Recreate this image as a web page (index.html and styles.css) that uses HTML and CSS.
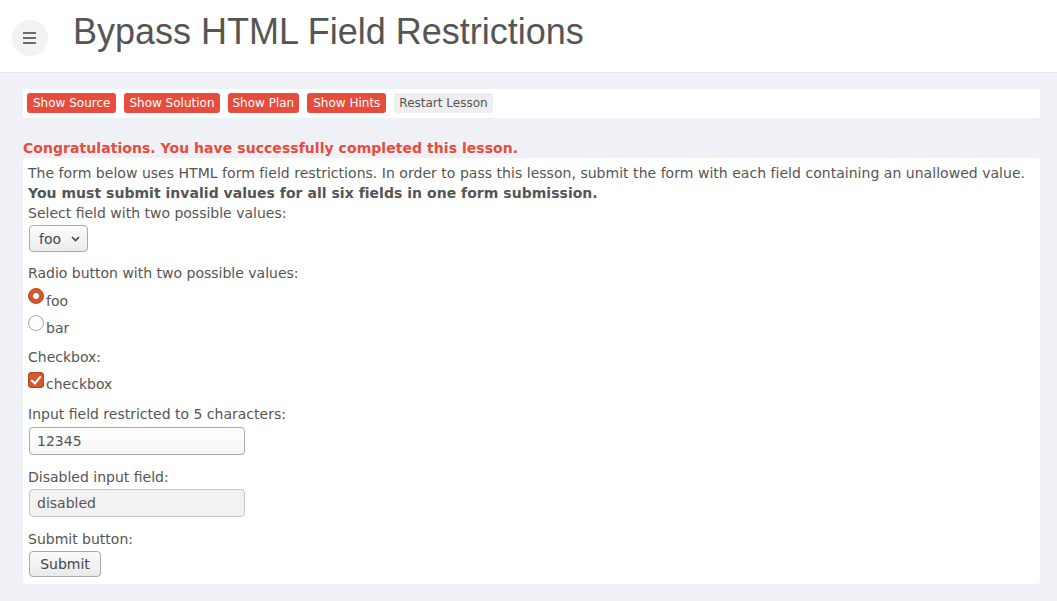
FILE: index.html
```html
<!DOCTYPE html>
<html lang="en">
<head>
<meta charset="utf-8">
<title>Bypass HTML Field Restrictions</title>
<link rel="stylesheet" href="styles.css">
</head>
<body>
<header class="topbar">
  <button class="menu-btn" type="button" aria-label="menu">
    <svg width="14" height="12" viewBox="0 0 14 12"><rect x="0" y="0" width="13" height="2" fill="#6b6b6b"/><rect x="0" y="5" width="13" height="2" fill="#6b6b6b"/><rect x="0" y="10" width="13" height="2" fill="#6b6b6b"/></svg>
  </button>
  <h1 class="page-title">Bypass HTML Field Restrictions</h1>
</header>
<main class="main">
  <div class="lesson-bar">
    <button class="btn btn-red btn-first" type="button">Show Source</button>
    <button class="btn btn-red" type="button">Show Solution</button>
    <button class="btn btn-red" type="button">Show Plan</button>
    <button class="btn btn-red btn-hints" type="button">Show Hints</button>
    <button class="btn btn-gray" type="button">Restart Lesson</button>
  </div>
  <div class="feedback">Congratulations. You have successfully completed this lesson.</div>
  <div class="lesson-content">
    <div class="intro">The form below uses HTML form field restrictions. In order to pass this lesson, submit the form with each field containing an unallowed value.<br><b>You must submit invalid values for all six fields in one form submission.</b></div>
    <form class="lesson-form" onsubmit="return false">
      <div class="lbl">Select field with two possible values:</div>
      <div class="select-wrap">
        <select class="sel"><option>foo</option><option>bar</option></select>
        <svg class="chev" width="9" height="6" viewBox="0 0 9 6"><path d="M1 1 L4.5 4.5 L8 1" fill="none" stroke="#444" stroke-width="1.6"/></svg>
      </div>
      <div class="lbl lbl-radio">Radio button with two possible values:</div>
      <div class="opt-row opt-first"><input class="radio" type="radio" name="r" checked>foo</div>
      <div class="opt-row"><input class="radio" type="radio" name="r">bar</div>
      <div class="lbl lbl-check">Checkbox:</div>
      <div class="opt-row opt-check"><input class="check" type="checkbox" checked>checkbox</div>
      <div class="lbl lbl-input">Input field restricted to 5 characters:</div>
      <input class="txt" type="text" value="12345" maxlength="5">
      <div class="lbl lbl-gap">Disabled input field:</div>
      <input class="txt txt-disabled" type="text" value="disabled" disabled>
      <div class="lbl lbl-gap">Submit button:</div>
      <button class="submit" type="submit">Submit</button>
    </form>
  </div>
</main>
</body>
</html>
```
FILE: styles.css
```css
* { box-sizing: border-box; }
html, body { margin: 0; padding: 0; }
body {
  background: #f0f1f6;
  font-family: "DejaVu Sans", Verdana, sans-serif;
  font-size: 14px;
  color: #555;
  height: 601px;
  overflow: hidden;
}
.topbar {
  background: #fff;
  height: 73px;
  border-bottom: 1px solid #e3e4e8;
  display: flex;
  align-items: center;
  padding-left: 12px;
}
.menu-btn {
  width: 36px;
  height: 36px;
  border-radius: 50%;
  border: none;
  background: #f2f2f2;
  padding: 0;
  display: flex;
  align-items: center;
  justify-content: center;
  margin-top: 3px;
}
.page-title {
  margin: 0 0 0 25px;
  font-family: "Liberation Sans", Arial, sans-serif;
  font-weight: normal;
  font-size: 36px;
  color: #555;
  line-height: 40px;
  margin-top: -8px;
}
.main {
  padding: 16px 17px 0 23px;
}
.lesson-bar {
  background: #fff;
  border-radius: 3px;
  padding: 4px;
  display: flex;
  gap: 8px;
  height: 29px;
}
.btn {
  font-family: "DejaVu Sans", Verdana, sans-serif;
  font-size: 12px;
  height: 20px;
  line-height: 20px;
  padding: 0 5px;
  border: none;
  border-radius: 3px;
}
.btn-first { padding: 0 6px; }
.btn-hints { padding: 0 6px; }
.btn-red { background: #e74c3c; color: #fff; }
.btn-gray { background: #eeeeee; color: #555; }
.feedback {
  color: #e74c3c;
  font-weight: bold;
  margin-top: 20px;
  line-height: 20px;
  letter-spacing: 0.05px;
}
.lesson-content {
  background: #fff;
  border-radius: 4px;
  margin-top: 0;
  padding: 5px 5px 7px 5px;
  height: 426px;
}
.intro { line-height: 20px; letter-spacing: 0.03px; }
.intro b { font-weight: bold; }
.lesson-form { display: flex; flex-direction: column; align-items: flex-start; }
.lbl { line-height: 20px; }
.select-wrap { position: relative; margin-top: 2px; margin-left: 1px; }
.sel {
  appearance: none;
  -webkit-appearance: none;
  width: 59px;
  height: 27px;
  border: 1px solid #a9a9a9;
  border-radius: 4px;
  background: linear-gradient(#fbfbfb, #ececec);
  font-family: "DejaVu Sans", Verdana, sans-serif;
  font-size: 14px;
  color: #444;
  padding: 0 0 0 9px;
  display: block;
}
.chev { position: absolute; left: 42px; top: 11px; pointer-events: none; }
.lbl-radio { margin-top: 11px; }
.opt-row { line-height: 27px; height: 27px; }
.opt-first { margin-top: 5px; }
.radio {
  appearance: none;
  -webkit-appearance: none;
  width: 16px;
  height: 16px;
  margin: 0 2px 2px 0;
  border-radius: 50%;
  border: 1px solid #a8a8a8;
  background: #fff;
  vertical-align: baseline;
}
.radio:checked {
  border: 1px solid #b6461d;
  background: radial-gradient(circle, #fff 0 2.6px, #d4582b 3.3px);
}
.lbl-check { margin-top: 5px; }
.opt-check { margin-top: 4px; }
.check {
  appearance: none;
  -webkit-appearance: none;
  width: 16px;
  height: 16px;
  margin: 0 2px 1px 0;
  border-radius: 3px;
  border: 1px solid #b0b0b0;
  background: #fff;
  vertical-align: baseline;
  position: relative;
}
.check:checked {
  border-color: #b6461d;
  background: #d4582b;
}
.check:checked::after {
  content: "";
  position: absolute;
  left: 4px;
  top: 1px;
  width: 4px;
  height: 8px;
  border: solid #fff;
  border-width: 0 2px 2px 0;
  transform: rotate(40deg);
}
.lbl-input { margin-top: 6px; }
.txt {
  width: 216px;
  height: 28px;
  margin-top: 3px;
  margin-left: 1px;
  border: 1px solid #a9a9a9;
  border-radius: 4px;
  background: linear-gradient(#fff, #f6f6f6);
  font-family: "DejaVu Sans", Verdana, sans-serif;
  font-size: 14px;
  color: #555;
  padding: 0 7px;
}
.txt-disabled {
  background: #f2f2f2;
  border-color: #c6c6c6;
  color: #555;
  margin-top: 2px;
}
.lbl-gap { margin-top: 12px; }
.submit {
  margin-top: 2px;
  margin-left: 1px;
  width: 72px;
  height: 26px;
  border: 1px solid #a9a9a9;
  border-radius: 4px;
  background: linear-gradient(#fbfbfb, #e9e9e9);
  font-family: "DejaVu Sans", Verdana, sans-serif;
  font-size: 14px;
  color: #444;
  padding: 0;
}
```
